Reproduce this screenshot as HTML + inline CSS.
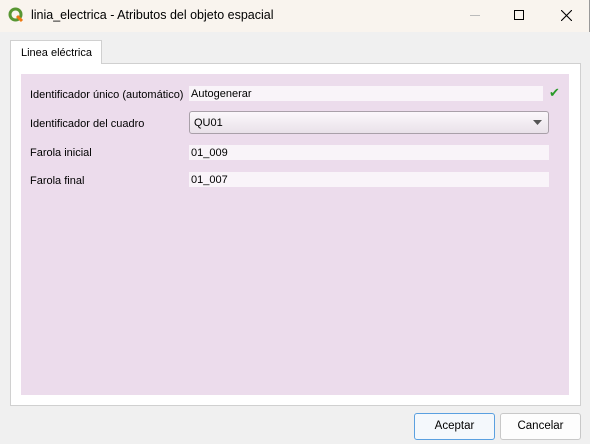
<!DOCTYPE html>
<html><head><style>
*{margin:0;padding:0;box-sizing:border-box}
body{width:590px;height:444px;overflow:hidden;background:#f0f0f0;font-family:"Liberation Sans",sans-serif;font-size:12px;color:#000;position:relative}
.title{position:absolute;left:0;top:0;width:590px;height:32px;background:#f9f4ee;border-right:1px solid #999}
.title span{position:absolute;left:31px;top:8px;font-size:12.5px}
.a{position:absolute}
.frame{left:10px;top:63px;width:571px;height:343px;background:#fff;border:1px solid #d0d0d0}
.tab{left:10px;top:40px;width:92px;height:24px;background:#fff;border:1px solid #d0d0d0;border-bottom:none;padding:6px 0 0 10px;font-size:11px}
.pink{left:21px;top:74px;width:548px;height:321px;background:#ecdcec}
.lbl{font-size:11px}
.fld{background:#f9f4f9;height:15px;font-size:11px;padding-left:2px;line-height:17px}
.combo{left:189px;top:111px;width:360px;height:23px;border:1px solid #a9a0a9;border-radius:3px;background:linear-gradient(#fbf8fb,#e9e1e9);padding:5px 0 0 4px;font-size:11px}
.btn{top:413px;width:81px;height:27px;border:1px solid #c8c8c8;border-radius:3px;background:#fdfdfd;text-align:center;line-height:25px;font-size:11.5px}
</style></head><body>
<div class="title"><svg class="a" style="left:8px;top:7px" width="16" height="16" viewBox="0 0 16 16"><circle cx="7.5" cy="7.5" r="5.5" fill="none" stroke="#589632" stroke-width="3"/><path d="M9 9 L14 14" stroke="#ee7913" stroke-width="3"/></svg><span>linia_electrica - Atributos del objeto espacial</span>
<div class="a" style="left:470px;top:15px;width:10px;height:1px;background:#bbb"></div>
<div class="a" style="left:514px;top:10px;width:10px;height:10px;border:1px solid #000"></div>
<svg class="a" style="left:561px;top:10px" width="11" height="11"><path d="M0 0L11 11M11 0L0 11" stroke="#000" stroke-width="1.1"/></svg>
</div>
<div class="a frame"></div>
<div class="a tab">Linea eléctrica</div>
<div class="a pink"></div>
<div class="a lbl" style="left:30px;top:89px">Identificador único (automático)</div>
<div class="a fld" style="left:189px;top:86px;width:354px">Autogenerar</div>
<div class="a" style="left:549px;top:85px;color:#2a9a2a;font-size:13px">✔</div>
<div class="a lbl" style="left:30px;top:118px">Identificador del cuadro</div>
<div class="a combo">QU01</div>
<svg class="a" style="left:533px;top:120px" width="9" height="5"><path d="M0 0H9L4.5 5Z" fill="#555"/></svg>
<div class="a lbl" style="left:30px;top:147px">Farola inicial</div>
<div class="a fld" style="left:189px;top:145px;width:360px">01_009</div>
<div class="a lbl" style="left:30px;top:175px">Farola final</div>
<div class="a fld" style="left:189px;top:172px;width:360px">01_007</div>
<div class="a btn" style="left:414px;border-color:#5aa0e0;background:#f4f8fc">Aceptar</div>
<div class="a btn" style="left:500px">Cancelar</div>
</body></html>
